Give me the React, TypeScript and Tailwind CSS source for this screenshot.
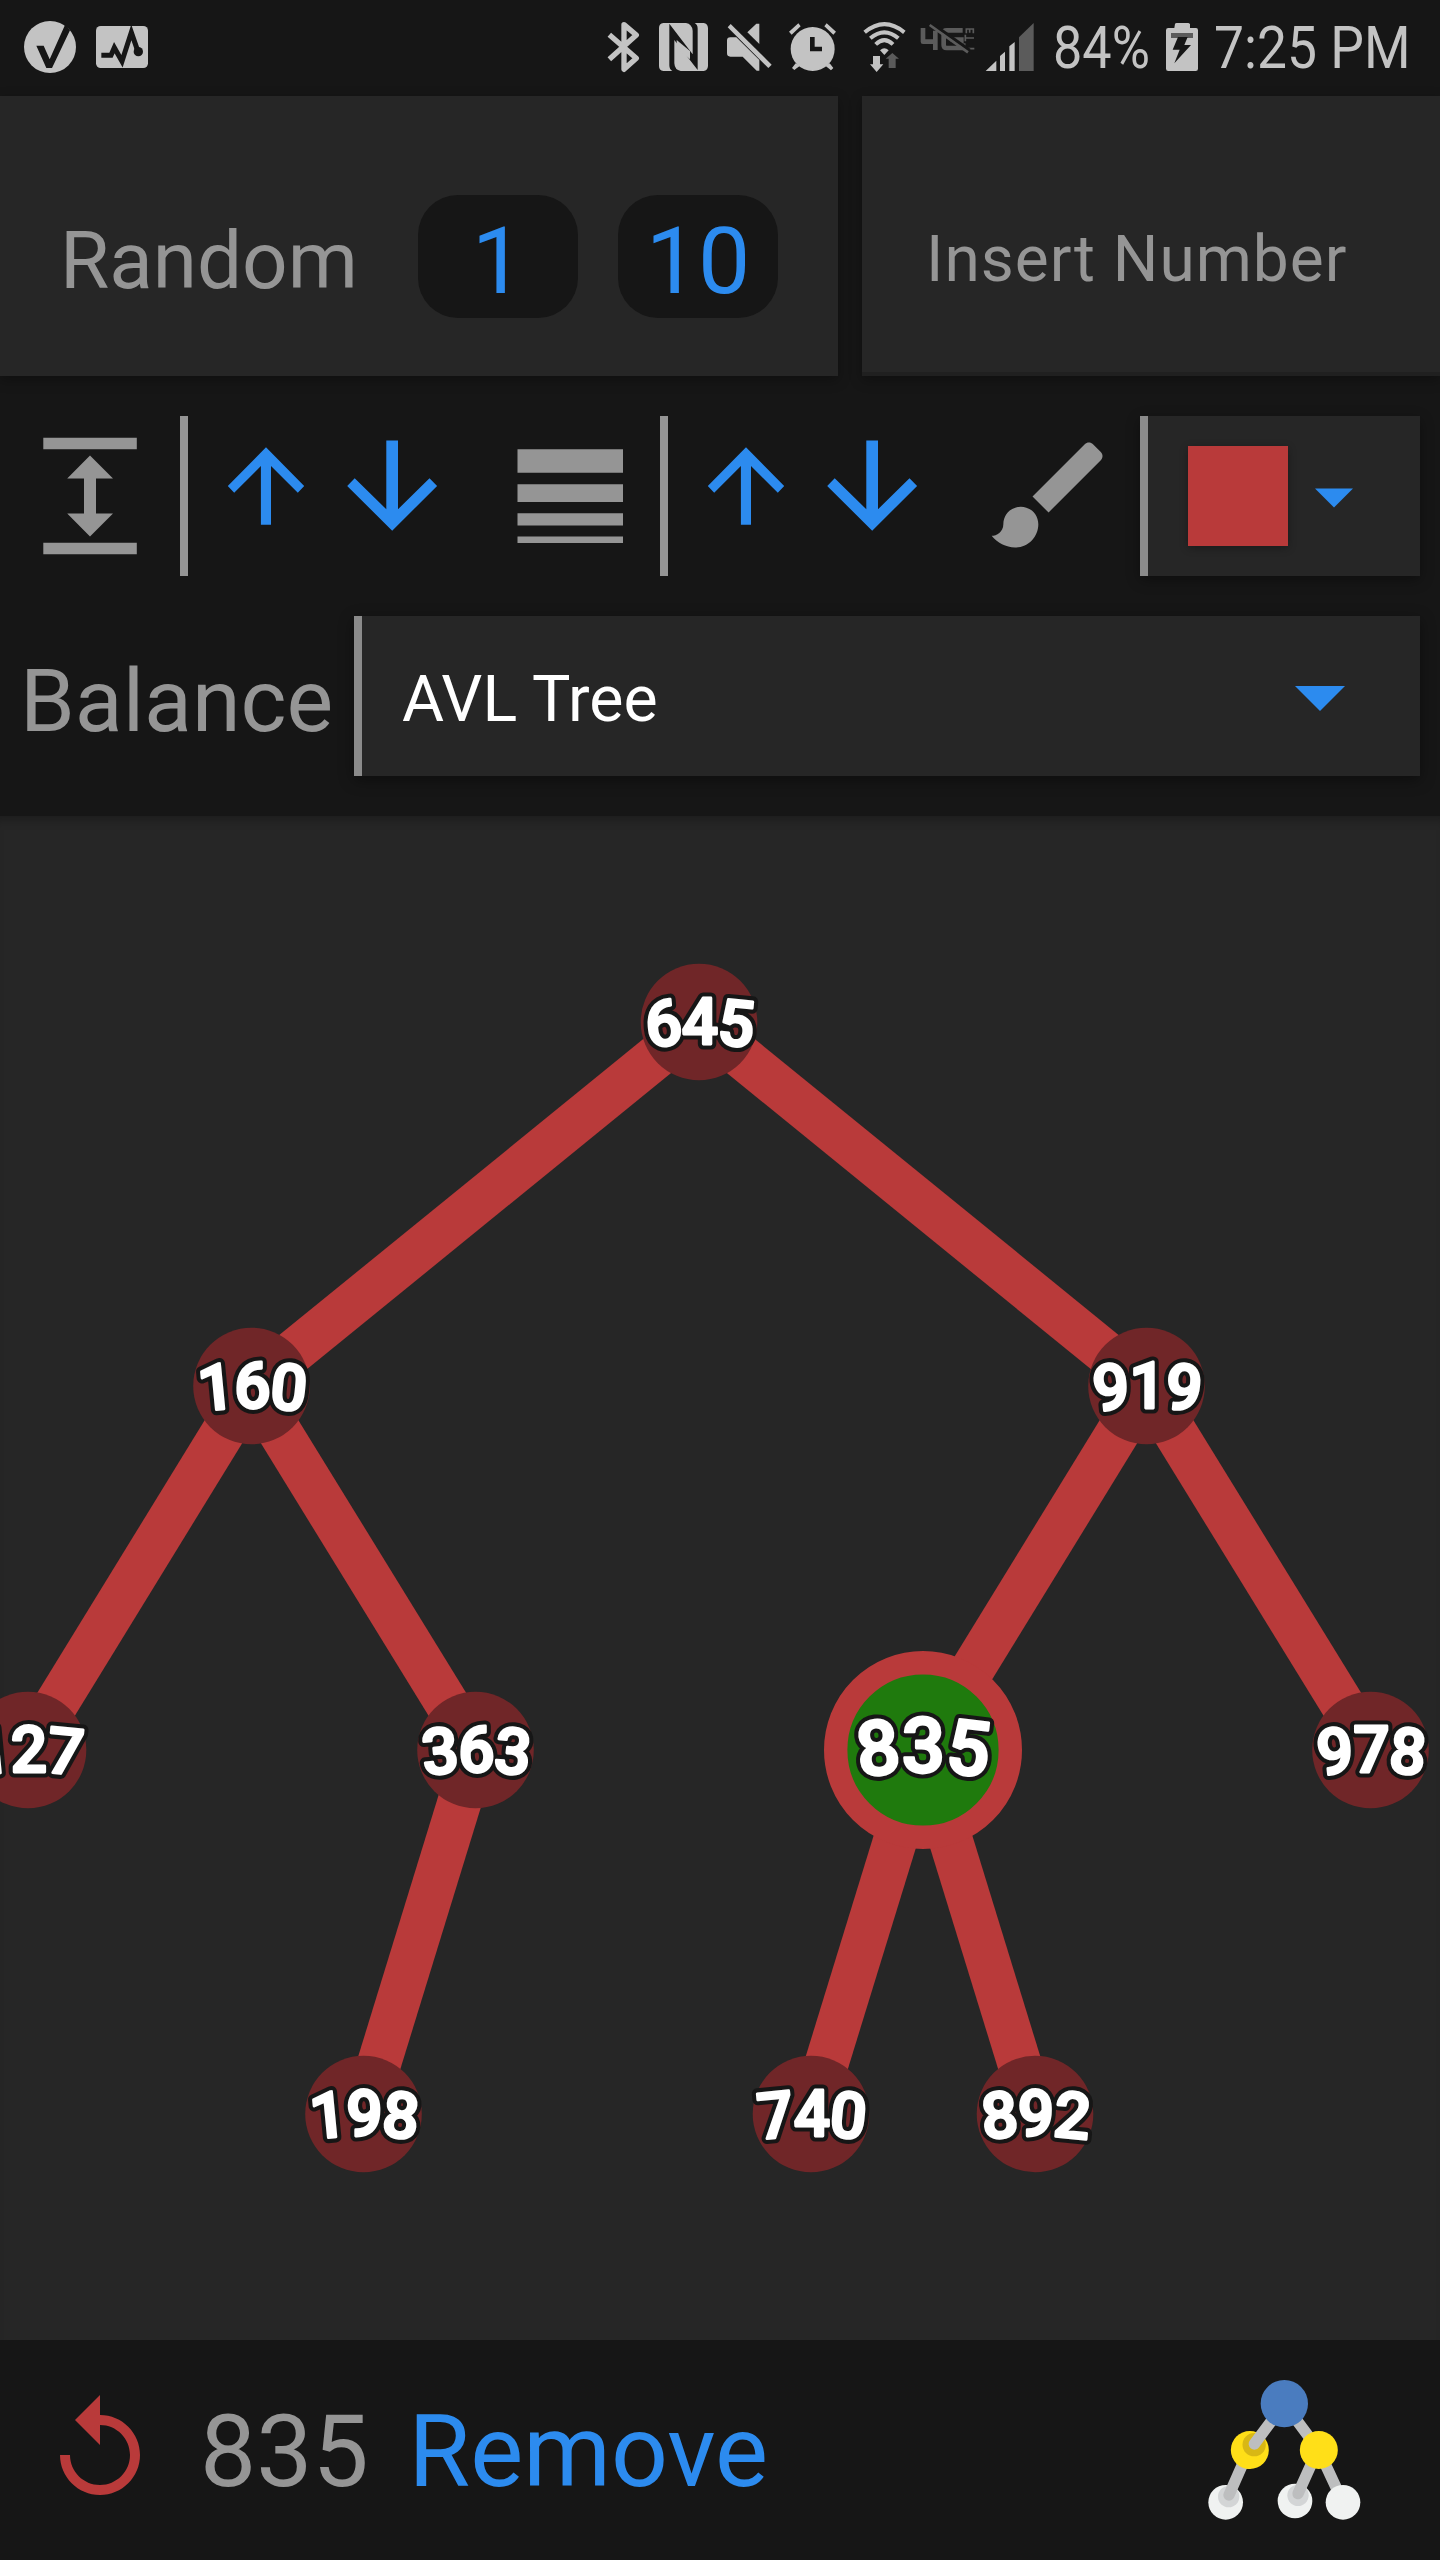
import React from "react";

const LIGHT = "#c3c3c3";
const DIM = "#5b5b5b";
const DARK = "#161616";

/* Status bar glyphs share one coordinate space: three units to a pixel. */
function StatusGlyph({ x, w, children }: { x: number; w: number; children: React.ReactNode }) {
  return (
    <svg width={w / 3} height={96} viewBox={`${x} 0 ${w} 288`} className="shrink-0" fill={LIGHT}>
      {children}
    </svg>
  );
}

function StatusBar() {
  return (
    <header className="flex h-24 shrink-0 items-start bg-[#161616] text-[60px] leading-[96px] text-[#c3c3c3]">
      <StatusGlyph x={0} w={258}>
        <circle cx="150" cy="141" r="78" />
        <path d="M109 137h22l18 41 47-105 14 18-54 113h-17z" fill={DARK} />
      </StatusGlyph>
      <StatusGlyph x={258} w={222}>
        <rect x="288" y="78" width="156" height="126" rx="14" />
        <path d="M304 166h29l10-23 23 41 28-87 20 58" fill="none" stroke={DARK} strokeWidth="15" />
        <circle cx="415" cy="155" r="14" fill={DARK} />
      </StatusGlyph>
      <div className="w-[430px]" />
      <StatusGlyph x={0} w={177}>
        <path
          d="M58 104L139 175L102 208V74L139 105L58 178"
          fill="none"
          stroke={LIGHT}
          strokeWidth="16"
          strokeLinejoin="round"
        />
      </StatusGlyph>
      <StatusGlyph x={177} w={204}>
        <path d="M220 69H288Q306 72 308 92V163L238 71V196Q238 208 247 213H220Q207 211 207 198V84Q207 71 220 69Z" />
        <path d="M314 69H341Q353 71 354 84V198Q353 211 341 213H272Q254 210 253 190V120L323 210V86Q323 74 314 69Z" />
        <path d="M260 120L300 153V178L260 144Z" />
      </StatusGlyph>
      <StatusGlyph x={381} w={189}>
        <path d="M422 72L545 194L535 204L413 82Z" />
        <path d="M411 122Q411 112 421 112H439L508 180V212H500L458 170H421Q411 170 411 160Z" />
        <path d="M472 97L499 71H508V132Z" />
      </StatusGlyph>
      <StatusGlyph x={570} w={207}>
        <circle cx="668" cy="147" r="66" />
        <path d="M625 70L632 79L605 104L597 95ZM710 70L703 79L730 104L738 95Z" />
        <path d="M617 190L606 204L613 210L630 197M719 190L730 204L723 211L706 197" />
        <path d="M667 111V147H696" fill="none" stroke={DARK} strokeWidth="14" />
      </StatusGlyph>
      <StatusGlyph x={777} w={192}>
        <g fill="none" stroke={LIGHT} strokeWidth="12">
          <path d="M824 97Q883 48 943 97" />
          <path d="M841 115Q883 79 925 115" />
          <path d="M857 133Q883 108 909 133" />
        </g>
        <path d="M870 151Q883 139 896 151L883 165Z" />
        <path d="M849 168h21v25h10l-20 23-20-23h9z" />
        <path d="M896 204v-28h-9l20-17 20 17h-10v28z" fill={DIM} />
      </StatusGlyph>
      <StatusGlyph x={969} w={201}>
        <g fill="none" stroke={DIM} strokeWidth="14">
          <path d="M999 84V125H1036M1036 92V150" strokeLinejoin="round" />
          <path d="M1118 91H1070Q1061 91 1061 100V135Q1061 144 1070 144H1114V119H1082" />
          <path d="M1124 130V146H1153M1126 104V124M1126 114H1152M1129 100V87H1150V100M1139 87V98" strokeWidth="5" />
        </g>
        <path d="M1027 65L1142 147L1136 155L1021 73Z" fill={DARK} />
        <path d="M1019 75L1134 157" stroke={DIM} strokeWidth="8" />
      </StatusGlyph>
      <StatusGlyph x={1170} w={180}>
        <path d="M1187 213L1219 182V213ZM1230 168L1245 155V213H1230ZM1258 139L1274 126V213H1258Z" />
        <path d="M1287 112L1331 69V213H1287Z" fill={DIM} />
      </StatusGlyph>
      <div className="ml-[13px] w-[113px]">
        <span className="inline-block origin-left scale-x-[0.87]">84%</span>
      </div>
      <StatusGlyph x={498} w={96}>
        <path d="M525 72Q526 69 530 69H564Q568 69 570 73V84H588Q594 84 594 91V206Q594 213 587 213H505Q498 213 498 206V91Q498 84 505 84H523Z" />
        <path d="M513 99H579V114H513Z" fill={DIM} />
        <path d="M534 111H563L553 135H573L523 190L539 149H518Z" fill={DARK} />
      </StatusGlyph>
      <div className="ml-[16px]">
        <span className="inline-block origin-left scale-x-[0.89] whitespace-nowrap">7:25 PM</span>
      </div>
    </header>
  );
}

function PillButton({ children }: { children: React.ReactNode }) {
  return (
    <button className="flex h-[123px] w-40 items-center justify-center rounded-[40px] bg-[#161616] pt-[9px] text-[93px] leading-none text-[#2c8bef]">
      {children}
    </button>
  );
}

function InsertRow() {
  return (
    <section className="flex h-[280px] shrink-0 gap-6">
      <div className="flex w-[838px] items-start bg-[#262626] pt-[99px] pl-[60px] shadow-[0_4px_12px_rgba(0,0,0,0.3)]">
        <span className="w-[358px] pt-[9px] text-[80px] leading-[114px] text-[#959595]">Random</span>
        <div className="flex gap-10">
          <PillButton>1</PillButton>
          <PillButton>10</PillButton>
        </div>
      </div>
      <div className="flex flex-1 items-start border-b-4 border-[#202020] bg-[#262626] pt-[114px] pl-[64px] shadow-[0_4px_12px_rgba(0,0,0,0.3)]">
        <span className="text-[64px] leading-[100px] tracking-[1px] whitespace-nowrap text-[#959595]">
          Insert Number
        </span>
      </div>
    </section>
  );
}

function Arrows() {
  return (
    <svg width="232" height="160" viewBox="220 416 232 160" fill="#2c8bef">
      <path d="M266 447.3L304.2 486L297.8 492.7L271 466V524.7H260.9V466L234.2 492.7L227.8 486Z" />
      <path d="M392.2 530.7L437.1 486L429.5 478.3L398 509.3V440.5H386.3V509.3L354.7 478.3L347.2 486Z" />
    </svg>
  );
}

function Toolbar() {
  return (
    <section className="flex h-40 shrink-0">
      <svg width="180" height="160" viewBox="0 416 180 160" fill="#959595">
        <path d="M43.3 437.8H136.8V449.3H43.3ZM43.3 542.8H136.8V554.3H43.3Z" />
        <path d="M90 455.5L113 478.6H96V513.4H113L90 536.5L67.2 513.4H84V478.6H67.2Z" />
      </svg>
      <div className="w-8 border-l-8 border-[#959595]" />
      <div className="w-2" />
      <Arrows />
      <svg width="208" height="160" viewBox="452 416 208 160" fill="#959595">
        <path d="M517.5 449.2H623V472.7H517.5ZM517.5 484.2H623V502H517.5ZM517.5 513.3H623V525.5H517.5ZM517.5 536.5H623V543H517.5Z" />
      </svg>
      <div className="w-8 border-l-8 border-[#959595]" />
      <div className="w-2" />
      <Arrows />
      <div className="w-12" />
      <svg width="140" height="140" viewBox="0 0 24 24" className="mt-[9px]" fill="#959595">
        <path d="M7 14c-1.66 0-3 1.34-3 3 0 1.31-1.16 2-2 2 .92 1.22 2.49 2 4 2 2.21 0 4-1.79 4-4 0-1.66-1.34-3-3-3zm13.71-9.37l-1.34-1.34c-.39-.39-1.02-.39-1.41 0L9 12.25 11.75 15l8.96-8.96c.39-.39.39-1.02 0-1.41z" />
      </svg>
      <div className="ml-5 flex w-[280px] items-center border-l-8 border-[#8b8b8b] bg-[#262626] pl-10 shadow-[0_4px_12px_rgba(0,0,0,0.35)]">
        <div className="size-[100px] bg-[#b93a3a] shadow-[0_2px_8px_rgba(0,0,0,0.3)]" />
        <svg width="38" height="20" viewBox="0 0 38 20" className="mt-[3px] ml-[27px]" fill="#2c8bef">
          <path d="M0 .5H38L19 19.5Z" />
        </svg>
      </div>
    </section>
  );
}

function BalanceRow() {
  return (
    <section className="mt-10 flex h-40 shrink-0">
      <span className="w-[354px] pt-[5px] pl-[20px] text-[88px] leading-[160px] text-[#959595]">Balance</span>
      <div className="flex w-[1066px] items-start justify-between border-l-8 border-[#8b8b8b] bg-[#262626] pr-[75px] pl-10 shadow-[0_4px_14px_rgba(0,0,0,0.4)]">
        <span className="pt-[3px] text-[64.5px] leading-[160px] text-white">AVL Tree</span>
        <svg width="50" height="25" viewBox="0 0 50 25" className="mt-[70px]" fill="#2c8bef">
          <path d="M0 0H50L25 25Z" />
        </svg>
      </div>
    </section>
  );
}

type TreeNode = { value: number; x: number; y: number; parent?: number; selected?: boolean };

const nodes: TreeNode[] = [
  { value: 645, x: 699, y: 206 },
  { value: 160, x: 251.5, y: 570, parent: 645 },
  { value: 919, x: 1146.5, y: 570, parent: 645 },
  { value: 127, x: 28, y: 934, parent: 160 },
  { value: 363, x: 475.5, y: 934, parent: 160 },
  { value: 835, x: 923, y: 934, parent: 919, selected: true },
  { value: 978, x: 1370.5, y: 934, parent: 919 },
  { value: 198, x: 363.5, y: 1298, parent: 363 },
  { value: 740, x: 811, y: 1298, parent: 835 },
  { value: 892, x: 1035, y: 1298, parent: 835 },
];

function NodeLabel({ node }: { node: TreeNode }) {
  const size = node.selected ? 76 : 64;
  const id = `arc-${node.value}`;
  const base = node.y + 22;
  const label = (
    <textPath href={`#${id}`} startOffset="50%">
      {node.value}
    </textPath>
  );
  return (
    <g
      fontSize={size}
      fontWeight={500}
      textAnchor="middle"
      strokeLinejoin="round"
      letterSpacing={node.selected ? -0.8 : -2}
    >
      <path id={id} d={`M${node.x - 90} ${base + 11.4}A360 360 0 0 1 ${node.x + 90} ${base + 11.4}`} fill="none" />
      <text fill={DARK} stroke={DARK} strokeWidth="11">
        {label}
      </text>
      <text fill="#fff" stroke="#fff" strokeWidth="2.8">
        {label}
      </text>
    </g>
  );
}

function TreeCanvas() {
  return (
    <main className="h-[1524px] shrink-0 bg-[#262626] shadow-[inset_0_10px_10px_-6px_rgba(0,0,0,0.25)]">
      <svg width="1440" height="1524" viewBox="0 0 1440 1524">
        {nodes.map((n) => {
          const p = nodes.find((m) => m.value === n.parent);
          return p ? (
            <line key={n.value} x1={p.x} y1={p.y} x2={n.x} y2={n.y} stroke="#b93a3a" strokeWidth="44" />
          ) : null;
        })}
        {nodes.map((n) => (
          <g key={n.value}>
            {n.selected ? (
              <circle cx={n.x} cy={n.y} r="87.3" fill="#1f7a0d" stroke="#b93a3a" strokeWidth="23.4" />
            ) : (
              <circle cx={n.x} cy={n.y} r="58.3" fill="#702628" />
            )}
            <NodeLabel node={n} />
          </g>
        ))}
      </svg>
    </main>
  );
}

function TreeLogo() {
  return (
    <svg width="154" height="140" viewBox="200 180 462 420" className="mr-[79px] ml-auto">
      <g stroke="#bdbebf" strokeWidth="34">
        <path d="M432 251L535 390L608 547" fill="none" />
        <circle cx="328.5" cy="390" r="57" fill="#ffdf18" stroke="none" />
        <circle cx="341.5" cy="374" r="35" fill="#d8b814" stroke="none" />
        <circle cx="256" cy="547" r="52" fill="#f0f2f1" stroke="none" />
        <circle cx="265" cy="530" r="32" fill="#d3d5d6" stroke="none" />
        <circle cx="464" cy="543" r="52" fill="#f0f2f1" stroke="none" />
        <circle cx="473" cy="526" r="32" fill="#d3d5d6" stroke="none" />
        <path d="M432 251L342 372" strokeLinecap="round" />
        <path d="M306 434L266 525" strokeLinecap="round" />
        <path d="M514 430L473 521" strokeLinecap="round" />
      </g>
      <path d="M286 428A57 57 0 0 0 331 447L315 400Z" fill="#ffdf18" />
      <circle cx="535.5" cy="390" r="57" fill="#ffdf18" />
      <circle cx="608" cy="547" r="52" fill="#f0f2f1" />
      <circle cx="432" cy="251" r="71" fill="#4a7cbf" />
    </svg>
  );
}

function BottomBar() {
  return (
    <footer className="flex h-[220px] shrink-0 items-center bg-[#161616] pl-10 text-[100px] leading-[120px]">
      <svg width="120" height="120" viewBox="0 0 24 24" fill="#b93a3a">
        <path d="M12 5V1L7 6l5 5V7c3.31 0 6 2.69 6 6s-2.69 6-6 6-6-2.69-6-6H4c0 4.42 3.58 8 8 8s8-3.58 8-8-3.58-8-8-8z" />
      </svg>
      <span className="ml-10 pt-1 text-[#959595]">835</span>
      <span className="ml-10 pt-1 text-[#2c8bef]">Remove</span>
      <TreeLogo />
    </footer>
  );
}

export default function App() {
  return (
    <div className="flex h-[2560px] w-[1440px] flex-col overflow-hidden bg-[#161616] font-['Roboto',sans-serif]">
      <StatusBar />
      <InsertRow />
      <div className="h-10 shrink-0" />
      <Toolbar />
      <BalanceRow />
      <div className="h-10 shrink-0" />
      <TreeCanvas />
      <BottomBar />
    </div>
  );
}
